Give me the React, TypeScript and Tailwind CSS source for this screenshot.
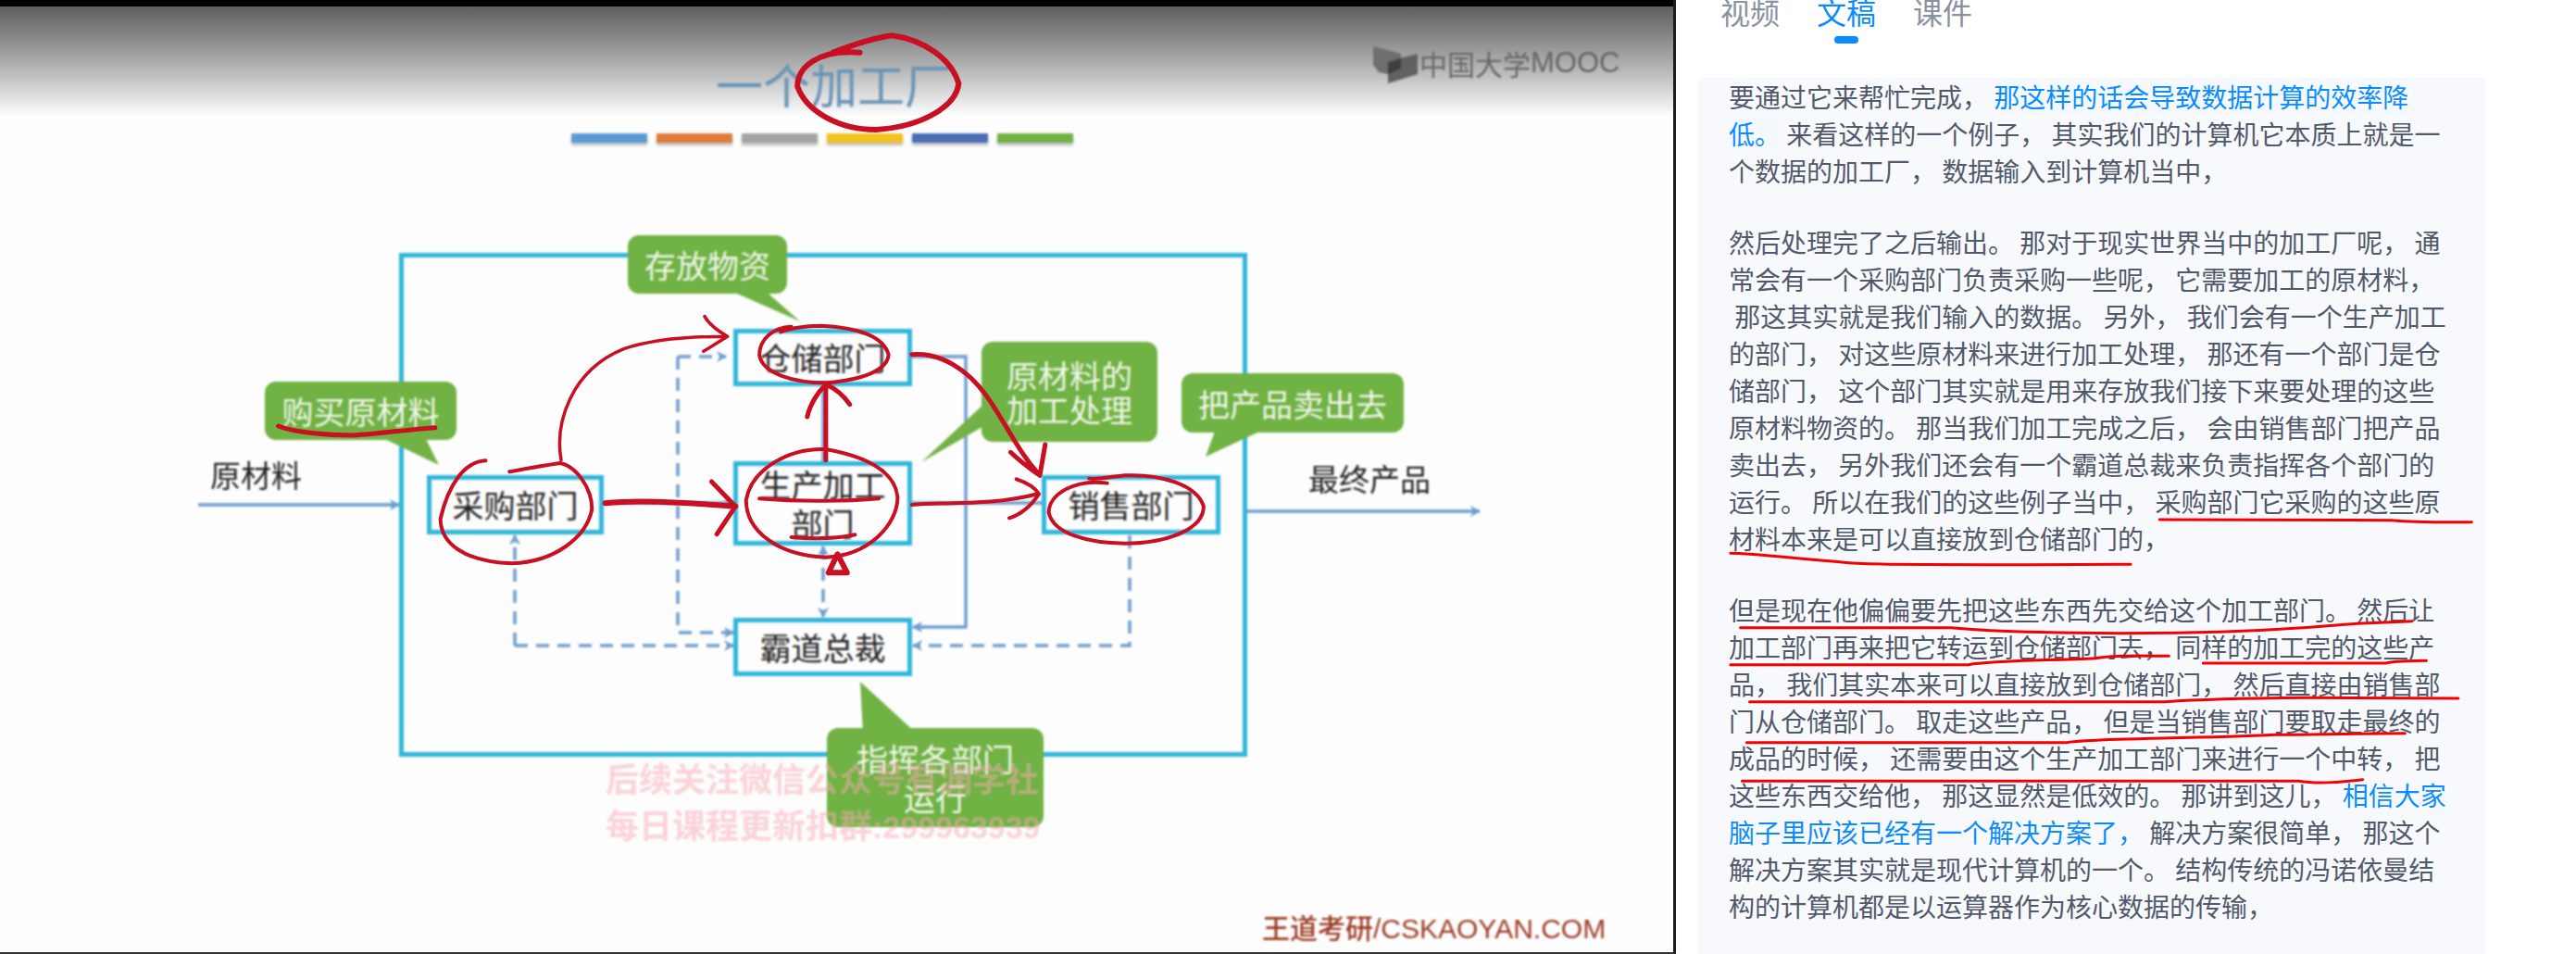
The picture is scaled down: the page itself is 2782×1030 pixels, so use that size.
import React from "react";

type Seg = { t: string; blue?: boolean; hl?: boolean };
type Line = Seg[];

const p1: Line[] = [
  [{ t: "要通过它来帮忙完成， " }, { t: "那这样的话会导致数据计算的效率降", blue: true, hl: true }],
  [{ t: "低。", blue: true, hl: true }, { t: " 来看这样的一个例子， 其实我们的计算机它本质上就是一" }],
  [{ t: "个数据的加工厂， 数据输入到计算机当中，" }],
];

const p2: Line[] = [
  [{ t: "然后处理完了之后输出。 那对于现实世界当中的加工厂呢， 通" }],
  [{ t: "常会有一个采购部门负责采购一些呢， 它需要加工的原材料，" }],
  [{ t: " 那这其实就是我们输入的数据。 另外， 我们会有一个生产加工" }],
  [{ t: "的部门， 对这些原材料来进行加工处理， 那还有一个部门是仓" }],
  [{ t: "储部门， 这个部门其实就是用来存放我们接下来要处理的这些" }],
  [{ t: "原材料物资的。 那当我们加工完成之后， 会由销售部门把产品" }],
  [{ t: "卖出去， 另外我们还会有一个霸道总裁来负责指挥各个部门的" }],
  [{ t: "运行。 所以在我们的这些例子当中， 采购部门它采购的这些原" }],
  [{ t: "材料本来是可以直接放到仓储部门的，" }],
];

const p3: Line[] = [
  [{ t: "但是现在他偏偏要先把这些东西先交给这个加工部门。 然后让" }],
  [{ t: "加工部门再来把它转运到仓储部门去， 同样的加工完的这些产" }],
  [{ t: "品， 我们其实本来可以直接放到仓储部门， 然后直接由销售部" }],
  [{ t: "门从仓储部门。 取走这些产品， 但是当销售部门要取走最终的" }],
  [{ t: "成品的时候， 还需要由这个生产加工部门来进行一个中转， 把" }],
  [{ t: "这些东西交给他， 那这显然是低效的。 那讲到这儿， " }, { t: "相信大家", blue: true }],
  [{ t: "脑子里应该已经有一个解决方案了，", blue: true }, { t: " 解决方案很简单， 那这个" }],
  [{ t: "解决方案其实就是现代计算机的一个。 结构传统的冯诺依曼结" }],
  [{ t: "构的计算机都是以运算器作为核心数据的传输，" }],
];

const Paragraph: React.FC<{ lines: Line[] }> = ({ lines }) => (
  <div className="mb-[37px]">
    {lines.map((line, i) => (
      <div key={i} className="h-[40px] whitespace-pre text-[28px] leading-[40px] text-[#515a6b]">
        {line.map((seg, j) => (
          <span
            key={j}
            className={
              (seg.blue ? "text-[#0a8cff] " : "") + (seg.hl ? "inline-block h-[40px] bg-[#f5f9fe]" : "")
            }
          >
            {seg.t}
          </span>
        ))}
      </div>
    ))}
  </div>
);

const boxClass =
  "absolute flex items-center justify-center border-[5px] border-[#2fb6da] bg-[#fdfdfd] text-[34px] leading-[42px] text-[#222] text-center";
const calloutClass =
  "absolute flex items-center justify-center rounded-[12px] bg-[#70b244] text-[34px] text-[#f1f7ea] text-center";

const Connectors = () => (
  <svg className="absolute left-0 top-0" width="1810" height="1030" fill="none">
    <defs>
      <marker id="ah" markerUnits="userSpaceOnUse" markerWidth="11" markerHeight="12" refX="10" refY="6" orient="auto-start-reverse">
        <path d="M0 0L11 6L0 12L3 6Z" fill="#6d9dcf" />
      </marker>
    </defs>
    <g stroke="#6d9dcf" strokeWidth="3.5">
      <path d="M214 545H431" markerEnd="url(#ah)" />
      <path d="M1346 552H1598" markerEnd="url(#ah)" />
      <path d="M652 543H792" markerEnd="url(#ah)" />
      <path d="M889 498V417" />
      <path d="M985 543H1125" />
      <path d="M985 385H1043V677H986" markerEnd="url(#ah)" />
    </g>
    <g stroke="#6d9dcf" strokeWidth="3.5" strokeDasharray="14 9">
      <path d="M556 697V578" markerEnd="url(#ah)" />
      <path d="M556 697H792" markerEnd="url(#ah)" />
      <path d="M732 385H784" markerEnd="url(#ah)" />
      <path d="M732 385V683H792" markerEnd="url(#ah)" />
      <path d="M889 590V666" markerStart="url(#ah)" markerEnd="url(#ah)" />
      <path d="M1220 578V697H986" markerEnd="url(#ah)" />
    </g>
    <g fill="#70b244">
      <polygon points="780,310 822,310 864,347" />
      <polygon points="407,470 458,470 474,502" />
      <polygon points="1066,433 1066,458 995,499" />
      <polygon points="1314,460 1373,460 1302,493" />
      <polygon points="932,792 990,792 929,736" />
    </g>
  </svg>
);

// red pen strokes, written in the scale they were traced at
const Ink = () => (
  <svg className="absolute left-0 top-0" width="2782" height="1030" fill="none" strokeLinecap="round" strokeLinejoin="round">
    <g stroke="#c90f22">
      <g transform="scale(1.1607 0.3333)">
        <path
          strokeWidth="6"
          vectorEffect="non-scaling-stroke"
          d="M800 170C760 160 742 220 742 280C750 360 780 420 815 420C860 410 890 340 892 270C885 190 860 130 830 115C810 125 790 150 775 170"
        />
      </g>
      <g transform="translate(180 240) scale(0.5741 0.3333)">
        <path vectorEffect="non-scaling-stroke" strokeWidth="5" d="M210 660C240 680 300 690 350 690C400 685 460 670 505 665" />
        <path vectorEffect="non-scaling-stroke" strokeWidth="4" d="M600 772C560 775 530 850 515 960C515 1040 560 1100 650 1105C730 1100 790 1020 800 930C800 860 770 790 740 780C700 790 670 800 645 808" />
        <path vectorEffect="non-scaling-stroke" strokeWidth="3.5" d="M742 770C730 650 760 480 860 410C920 375 990 370 1050 370M1012 305C1020 330 1040 355 1055 370L1010 418" />
        <path vectorEffect="non-scaling-stroke" strokeWidth="6" d="M825 910C880 900 950 905 1070 920" />
        <path vectorEffect="non-scaling-stroke" strokeWidth="5" d="M1025 840L1070 920L1035 1010" />
        <path vectorEffect="non-scaling-stroke" strokeWidth="4" d="M1240 735C1170 730 1100 800 1090 900C1090 1000 1150 1080 1240 1085C1320 1080 1375 980 1375 890C1370 810 1320 760 1240 735" />
        <path vectorEffect="non-scaling-stroke" strokeWidth="4" d="M1115 895C1180 905 1280 905 1340 895M1175 1020C1210 1025 1260 1025 1295 1012" />
        <path vectorEffect="non-scaling-stroke" strokeWidth="5" d="M1240 770L1240 525M1205 630C1210 590 1225 550 1240 525C1260 540 1275 565 1285 590" />
        <path vectorEffect="non-scaling-stroke" strokeWidth="6" d="M1262 1075L1245 1135L1280 1135Z" />
        <path vectorEffect="non-scaling-stroke" strokeWidth="4" d="M1175 338C1140 340 1115 380 1115 430C1120 490 1180 520 1240 520C1310 510 1355 480 1358 430C1350 370 1300 340 1230 335C1200 335 1170 345 1155 355" />
      </g>
      <g transform="translate(900 240) scale(0.4847 0.3333)">
        <path vectorEffect="non-scaling-stroke" strokeWidth="5" d="M175 428C240 420 300 480 340 560C380 640 410 740 460 820M395 745C420 780 440 800 460 820L472 720" />
        <path vectorEffect="non-scaling-stroke" strokeWidth="4" d="M175 915C250 905 350 920 455 880M408 832C435 845 450 860 458 880C440 920 420 945 392 958" />
        <path vectorEffect="non-scaling-stroke" strokeWidth="4" d="M610 845C540 830 480 880 480 940C490 1010 570 1040 650 1040C750 1040 825 990 825 920C810 850 730 815 650 820C610 825 590 835 570 830" />
      </g>
    </g>
    <g stroke="#f40000" strokeWidth="3">
      <g transform="translate(1800 340) scale(0.6263 0.3333)">
        <path vectorEffect="non-scaling-stroke" d="M850 663L1250 665C1290 672 1340 672 1388 671" />
        <path vectorEffect="non-scaling-stroke" d="M110 772C150 772 250 795 330 805C400 812 700 808 800 808" />
        <path vectorEffect="non-scaling-stroke" d="M127 1013L490 1013C560 1025 700 1035 880 1030C980 1028 1100 1015 1190 1000L1285 992" />
      </g>
      <g transform="translate(1800 680) scale(0.6263 0.3333)">
        <path vectorEffect="non-scaling-stroke" d="M110 113L520 113C560 100 640 100 740 92C770 80 820 85 866 85" />
        <path vectorEffect="non-scaling-stroke" d="M925 108L1240 108C1260 100 1290 100 1310 100" />
        <path vectorEffect="non-scaling-stroke" d="M143 233L860 233C900 228 1000 222 1100 220L1365 222" />
        <path vectorEffect="non-scaling-stroke" d="M138 365L690 365C740 350 900 354 1050 340C1120 340 1200 335 1273 335" />
        <path vectorEffect="non-scaling-stroke" d="M130 490L1090 490C1120 500 1160 495 1200 485" />
      </g>
    </g>
  </svg>
);

const MoocMark = () => (
  <svg className="absolute left-[1483px] top-[50px]" width="48" height="40" viewBox="0 0 48 40">
    <polygon points="0,0 30,8 30,14 16,24 16,30 6,28 0,20" fill="#6e6e6e" />
    <polygon points="16,16 48,8 48,30 16,40" fill="#616161" />
    <polygon points="16,18 30,13 30,24 16,30" fill="#3f3f3f" />
  </svg>
);

const App: React.FC = () => {
  return (
    <div lang="zh-CN" className="relative flex h-[1030px] w-[2782px] overflow-hidden bg-white font-['Noto_Sans_CJK_SC',sans-serif]">
      <div className="relative h-full w-[1810px] shrink-0 overflow-hidden border-r-[3px] border-b-[2px] border-r-[#1c1c1c] border-b-[#333] bg-[#fdfdfd]">
        <div className="h-[7px] bg-black" />
        <div className="h-[118px] bg-linear-to-b from-[#5f5f5f] to-[#fdfdfd]" />

        <div className="absolute inset-0 blur-[0.8px]">
          <div className="absolute left-[773px] top-[60px] text-[51px] leading-[60px] text-[#6a94b6]">一个加工厂</div>
          <MoocMark />
          <div className="absolute left-[1533px] top-[48px] flex items-center text-[30px] leading-[40px] text-[#666]">
            中国大学<span className="font-['Liberation_Sans',sans-serif] text-[31px]">MOOC</span>
          </div>

          <div className="absolute left-[617px] top-[144px] flex gap-[10px]">
            <div className="h-[10px] w-[82px] bg-[#5b9bd5] shadow-[0_3px_3px_rgba(0,0,0,0.25)]" />
            <div className="h-[10px] w-[82px] bg-[#e07b3c] shadow-[0_3px_3px_rgba(0,0,0,0.25)]" />
            <div className="h-[10px] w-[82px] bg-[#a5a5a5] shadow-[0_3px_3px_rgba(0,0,0,0.25)]" />
            <div className="h-[10px] w-[82px] bg-[#f5c11c] shadow-[0_3px_3px_rgba(0,0,0,0.25)]" />
            <div className="h-[10px] w-[82px] bg-[#4a6fb8] shadow-[0_3px_3px_rgba(0,0,0,0.25)]" />
            <div className="h-[10px] w-[82px] bg-[#70b244] shadow-[0_3px_3px_rgba(0,0,0,0.25)]" />
          </div>

          <div className="absolute left-[431px] top-[273px] h-[544px] w-[916px] border-[5px] border-[#2fb6da]" />
          <Connectors />

          <div className="absolute left-[227px] top-[490px] text-[33px] leading-[44px] text-[#222]">原材料</div>
          <div className="absolute left-[1413px] top-[494px] text-[33px] leading-[44px] text-[#222]">最终产品</div>

          <div className={boxClass + " left-[461px] top-[513px] h-[64px] w-[191px]"}>采购部门</div>
          <div className={boxClass + " left-[792px] top-[355px] h-[62px] w-[193px]"}>仓储部门</div>
          <div className={boxClass + " left-[792px] top-[498px] h-[91px] w-[193px]"}>
            生产加工
            <br />
            部门
          </div>
          <div className={boxClass + " left-[792px] top-[667px] h-[63px] w-[193px]"}>霸道总裁</div>
          <div className={boxClass + " left-[1125px] top-[513px] h-[64px] w-[193px]"}>销售部门</div>

          <div className={calloutClass + " left-[678px] top-[254px] h-[63px] w-[172px]"}>存放物资</div>
          <div className={calloutClass + " left-[286px] top-[412px] h-[63px] w-[207px]"}>购买原材料</div>
          <div className={calloutClass + " left-[1060px] top-[369px] h-[108px] w-[190px] leading-[37px]"}>
            原材料的
            <br />
            加工处理
          </div>
          <div className={calloutClass + " left-[1276px] top-[403px] h-[64px] w-[240px]"}>把产品卖出去</div>
          <div className={calloutClass + " left-[893px] top-[786px] h-[107px] w-[234px] leading-[42px]"}>
            指挥各部门
            <br />
            运行
          </div>

          <div className="absolute left-[654px] top-[814px] text-[36px] leading-[50px] font-bold text-[#f7a9b1]/50">
            <div>后续关注微信公众号有渊学社</div>
            <div>
              每日课程更新扣群<span className="font-['Liberation_Sans',sans-serif] text-[34px]">:299963939</span>
            </div>
          </div>

          <div className="absolute left-[1363px] top-[979px] text-[30px] leading-[42px] font-medium text-[#9b3a22]">
            王道考研<span className="font-['Liberation_Sans',sans-serif]">/CSKAOYAN.COM</span>
          </div>
        </div>
      </div>

      <div className="flex min-w-0 flex-1 flex-col">
        <div className="flex h-[84px] shrink-0 gap-[40px] pl-[48px] text-[32px] leading-[32px] text-[#8a919f]">
          <div className="-mt-[4px]">视频</div>
          <div className="-mt-[4px] flex flex-col items-center gap-[11px] text-[#0a8cff]">
            文稿
            <div className="h-[8px] w-[26px] rounded-full bg-[#0a8cff]" />
          </div>
          <div className="-mt-[4px]">课件</div>
        </div>
        <div className="ml-[24px] w-[850px] flex-1 bg-[#f8f9fd] pl-[33px]">
          <Paragraph lines={p1} />
          <Paragraph lines={p2} />
          <Paragraph lines={p3} />
        </div>
      </div>

      <Ink />
    </div>
  );
};

export default App;
